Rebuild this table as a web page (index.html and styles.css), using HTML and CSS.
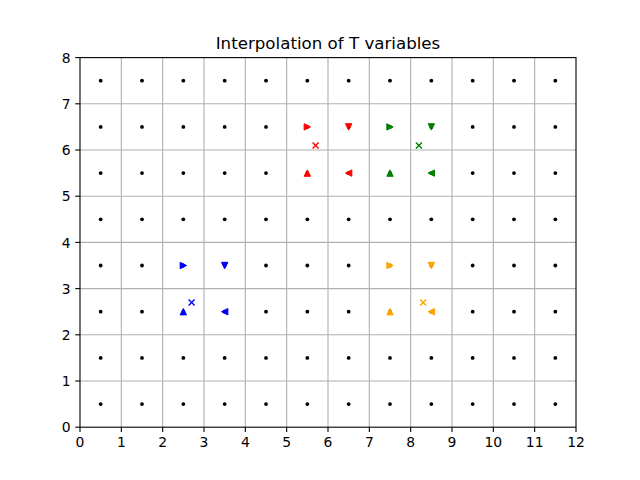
FILE: index.html
```html
<!DOCTYPE html>
<html>
<head>
<meta charset="utf-8">
<link rel="stylesheet" href="styles.css">
</head>
<body>
<div class="figure">
<svg class="chart" width="640" height="480" viewBox="0 0 640 480" xmlns="http://www.w3.org/2000/svg">
  <defs>
    <g id="row">
      <circle cx="100.67" cy="0" r="1.9"/>
      <circle cx="142" cy="0" r="1.9"/>
      <circle cx="183.33" cy="0" r="1.9"/>
      <circle cx="224.67" cy="0" r="1.9"/>
      <circle cx="266" cy="0" r="1.9"/>
      <circle cx="307.33" cy="0" r="1.9"/>
      <circle cx="348.67" cy="0" r="1.9"/>
      <circle cx="390" cy="0" r="1.9"/>
      <circle cx="431.33" cy="0" r="1.9"/>
      <circle cx="472.67" cy="0" r="1.9"/>
      <circle cx="514" cy="0" r="1.9"/>
      <circle cx="555.33" cy="0" r="1.9"/>
    </g>
    <path id="tu" d="M0,-3.2 L-3.2,3.2 L3.2,3.2 Z"/>
    <path id="td" d="M0,3.2 L-3.2,-3.2 L3.2,-3.2 Z"/>
    <path id="tr" d="M3.2,0 L-3.2,-3.2 L-3.2,3.2 Z"/>
    <path id="tl" d="M-3.2,0 L3.2,-3.2 L3.2,3.2 Z"/>
    <path id="cx" d="M-3,-3 L3,3 M-3,3 L3,-3"/>
  </defs>

  <rect class="bg" x="0" y="0" width="640" height="480"/>

  <g class="grid">
    <line x1="121.33" y1="57.6" x2="121.33" y2="427.2"/>
    <line x1="162.67" y1="57.6" x2="162.67" y2="427.2"/>
    <line x1="204" y1="57.6" x2="204" y2="427.2"/>
    <line x1="245.33" y1="57.6" x2="245.33" y2="427.2"/>
    <line x1="286.67" y1="57.6" x2="286.67" y2="427.2"/>
    <line x1="328" y1="57.6" x2="328" y2="427.2"/>
    <line x1="369.33" y1="57.6" x2="369.33" y2="427.2"/>
    <line x1="410.67" y1="57.6" x2="410.67" y2="427.2"/>
    <line x1="452" y1="57.6" x2="452" y2="427.2"/>
    <line x1="493.33" y1="57.6" x2="493.33" y2="427.2"/>
    <line x1="534.67" y1="57.6" x2="534.67" y2="427.2"/>
    <line x1="80" y1="381" x2="576" y2="381"/>
    <line x1="80" y1="334.8" x2="576" y2="334.8"/>
    <line x1="80" y1="288.6" x2="576" y2="288.6"/>
    <line x1="80" y1="242.4" x2="576" y2="242.4"/>
    <line x1="80" y1="196.2" x2="576" y2="196.2"/>
    <line x1="80" y1="150" x2="576" y2="150"/>
    <line x1="80" y1="103.8" x2="576" y2="103.8"/>
  </g>

  <g class="dots">
    <use href="#row" y="80.7"/>
    <use href="#row" y="126.9"/>
    <use href="#row" y="173.1"/>
    <use href="#row" y="219.3"/>
    <use href="#row" y="265.5"/>
    <use href="#row" y="311.7"/>
    <use href="#row" y="357.9"/>
    <use href="#row" y="404.1"/>
  </g>

  <g class="mk red">
    <use href="#tr" x="307.33" y="126.9"/>
    <use href="#td" x="348.67" y="126.9"/>
    <use href="#tu" x="307.33" y="173.1"/>
    <use href="#tl" x="348.67" y="173.1"/>
    <use class="cross" href="#cx" x="315.6" y="145.4"/>
  </g>
  <g class="mk green">
    <use href="#tr" x="390" y="126.9"/>
    <use href="#td" x="431.33" y="126.9"/>
    <use href="#tu" x="390" y="173.1"/>
    <use href="#tl" x="431.33" y="173.1"/>
    <use class="cross" href="#cx" x="418.9" y="145.4"/>
  </g>
  <g class="mk blue">
    <use href="#tr" x="183.33" y="265.5"/>
    <use href="#td" x="224.67" y="265.5"/>
    <use href="#tu" x="183.33" y="311.7"/>
    <use href="#tl" x="224.67" y="311.7"/>
    <use class="cross" href="#cx" x="191.6" y="302.5"/>
  </g>
  <g class="mk orange">
    <use href="#tr" x="390" y="265.5"/>
    <use href="#td" x="431.33" y="265.5"/>
    <use href="#tu" x="390" y="311.7"/>
    <use href="#tl" x="431.33" y="311.7"/>
    <use class="cross" href="#cx" x="423.1" y="302.5"/>
  </g>

  <rect class="spines" x="80" y="57.6" width="496" height="369.6"/>

  <g class="ticks">
    <line x1="80" y1="427.2" x2="80" y2="432"/>
    <line x1="121.33" y1="427.2" x2="121.33" y2="432"/>
    <line x1="162.67" y1="427.2" x2="162.67" y2="432"/>
    <line x1="204" y1="427.2" x2="204" y2="432"/>
    <line x1="245.33" y1="427.2" x2="245.33" y2="432"/>
    <line x1="286.67" y1="427.2" x2="286.67" y2="432"/>
    <line x1="328" y1="427.2" x2="328" y2="432"/>
    <line x1="369.33" y1="427.2" x2="369.33" y2="432"/>
    <line x1="410.67" y1="427.2" x2="410.67" y2="432"/>
    <line x1="452" y1="427.2" x2="452" y2="432"/>
    <line x1="493.33" y1="427.2" x2="493.33" y2="432"/>
    <line x1="534.67" y1="427.2" x2="534.67" y2="432"/>
    <line x1="576" y1="427.2" x2="576" y2="432"/>
    <line x1="75.2" y1="427.2" x2="80" y2="427.2"/>
    <line x1="75.2" y1="381" x2="80" y2="381"/>
    <line x1="75.2" y1="334.8" x2="80" y2="334.8"/>
    <line x1="75.2" y1="288.6" x2="80" y2="288.6"/>
    <line x1="75.2" y1="242.4" x2="80" y2="242.4"/>
    <line x1="75.2" y1="196.2" x2="80" y2="196.2"/>
    <line x1="75.2" y1="150" x2="80" y2="150"/>
    <line x1="75.2" y1="103.8" x2="80" y2="103.8"/>
    <line x1="75.2" y1="57.6" x2="80" y2="57.6"/>
  </g>

  <g class="xlabels">
    <text x="80" y="446.5">0</text>
    <text x="121.33" y="446.5">1</text>
    <text x="162.67" y="446.5">2</text>
    <text x="204" y="446.5">3</text>
    <text x="245.33" y="446.5">4</text>
    <text x="286.67" y="446.5">5</text>
    <text x="328" y="446.5">6</text>
    <text x="369.33" y="446.5">7</text>
    <text x="410.67" y="446.5">8</text>
    <text x="452" y="446.5">9</text>
    <text x="493.33" y="446.5">10</text>
    <text x="534.67" y="446.5">11</text>
    <text x="576" y="446.5">12</text>
  </g>
  <g class="ylabels">
    <text x="70.5" y="432.3">0</text>
    <text x="70.5" y="386.1">1</text>
    <text x="70.5" y="339.9">2</text>
    <text x="70.5" y="293.7">3</text>
    <text x="70.5" y="247.5">4</text>
    <text x="70.5" y="201.3">5</text>
    <text x="70.5" y="155.1">6</text>
    <text x="70.5" y="108.9">7</text>
    <text x="70.5" y="62.7">8</text>
  </g>

  <text class="title" x="328" y="49.2">Interpolation of T variables</text>
</svg>
</div>
</body>
</html>
```

FILE: styles.css
```css
html, body {
  margin: 0;
  padding: 0;
  background: #ffffff;
}

.figure {
  width: 640px;
  height: 480px;
  overflow: hidden;
}

.chart {
  display: block;
  font-family: "DejaVu Sans", sans-serif;
}

.bg {
  fill: #ffffff;
}

.grid line {
  stroke: #b0b0b0;
  stroke-width: 1.1;
}

.dots {
  fill: #000000;
}

.mk use {
  stroke-width: 1;
  stroke-linejoin: miter;
}

.mk .cross {
  fill: none;
  stroke-width: 1.4;
}

.red { fill: #ff0000; stroke: #ff0000; }
.green { fill: #008000; stroke: #008000; }
.blue { fill: #0000ff; stroke: #0000ff; }
.orange { fill: #ffa500; stroke: #ffa500; }

.spines {
  fill: none;
  stroke: #000000;
  stroke-width: 1.1;
}

.ticks line {
  stroke: #000000;
  stroke-width: 1.1;
}

.xlabels text {
  font-size: 13.9px;
  text-anchor: middle;
  fill: #000000;
}

.ylabels text {
  font-size: 13.9px;
  text-anchor: end;
  fill: #000000;
}

.title {
  font-size: 16.67px;
  text-anchor: middle;
  fill: #000000;
}
```
